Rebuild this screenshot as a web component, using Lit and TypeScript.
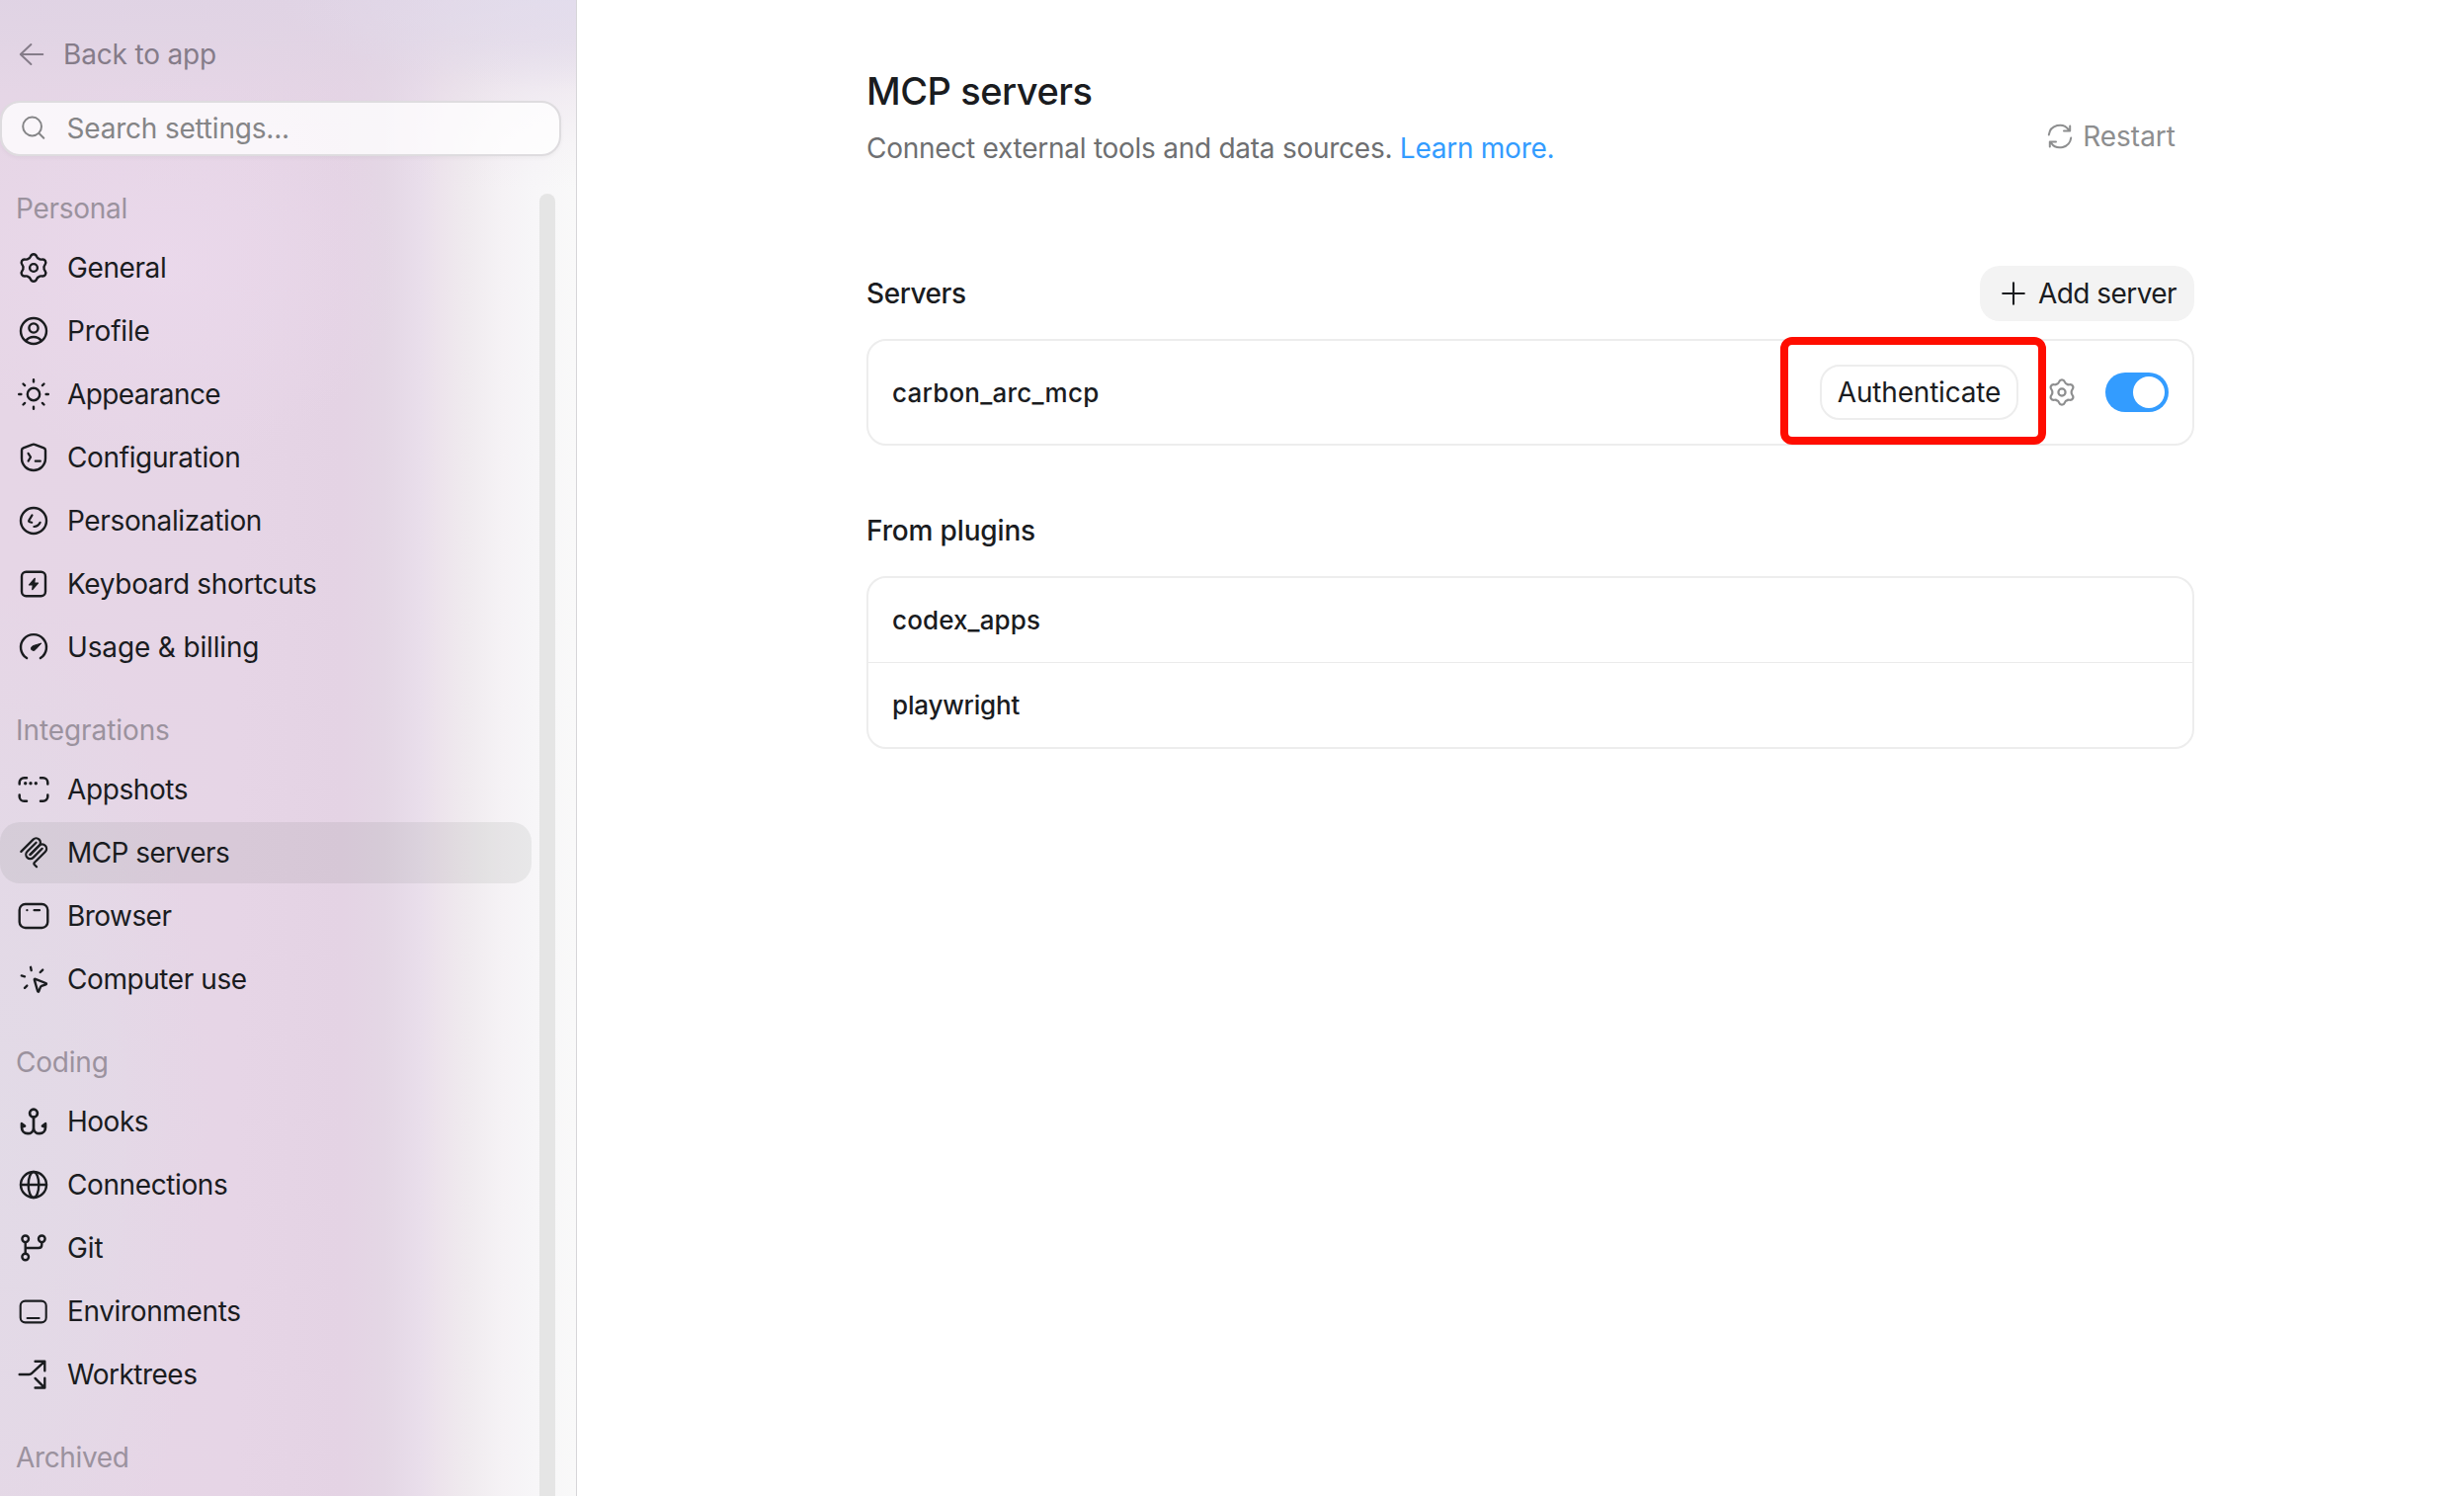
import { LitElement, html, svg, css, type SVGTemplateResult } from "lit";
import { customElement, property } from "lit/decorators.js";
import { classMap } from "lit/directives/class-map.js";
import { styleMap } from "lit/directives/style-map.js";

/** Builds a six-lobed gear outline centred on the origin. */
function gearPath(): string {
  const lobe: [number, number][] = [
    [-4, -9.4], [-3.7, -10.2], [-3.1, -11.5],
    [-2.4, -13.2], [-1.3, -13.8], [0, -13.8],
    [1.3, -13.8], [2.4, -13.2], [3.1, -11.5],
    [3.7, -10.2], [4, -9.4], [5.3, -9.2],
  ];
  const turn = ([x, y]: [number, number], a: number) => {
    const c = Math.cos(a), s = Math.sin(a);
    return `${(x * c - y * s).toFixed(2)} ${(x * s + y * c).toFixed(2)}`;
  };
  let d = `M${turn([-5.3, -9.2], 0)}`;
  for (let k = 0; k < 6; k++) {
    const p = lobe.map((pt) => turn(pt, (k * Math.PI) / 3));
    for (let i = 0; i < p.length; i += 3) d += `C${p[i]} ${p[i + 1]} ${p[i + 2]}`;
  }
  return d + "Z";
}

/* Every glyph is drawn around (0,0) in a 32-unit box. */
const ICONS: Record<string, SVGTemplateResult> = {
  back: svg`<path d="M11.3 0H-11M-.6-10-11.2 0-.6 10" stroke-width="2"/>`,
  search: svg`<circle cx="-1.4" cy="-2" r="9.4" stroke-width="2"/><path d="M5.5 5 10.3 9.8" stroke-width="2"/>`,
  gear: svg`<path d="${gearPath()}"/><circle r="3.9"/>`,
  user: svg`<circle r="13"/><circle cy="-3" r="4.6"/><path d="M-7.8 10C-6 7.3-3.2 6 0 6S6 7.3 7.8 10"/>`,
  sun: svg`<circle r="6.2"/><path d="M0-14.8V-12.6M0 12.6V14.8M-14.8 0H-12.6M12.6 0H14.8M-10.5-10.5-8.9-8.9M8.9 8.9 10.5 10.5M-10.5 10.5-8.9 8.9M8.9-8.9 10.5-10.5"/>`,
  shield: svg`<path d="M-1.1-13.1Q0-13.6 1.1-13.1L10.4-9.6Q12-9 12-7.2V.8C12 8 6.4 13 0 13S-12 8-12 .8V-7.2Q-12-9-10.4-9.6Z"/><path d="M-5.4-4.2-3-.3-5.4 3.6M1.8 3.7H6.8" stroke-width="2.2"/>`,
  face: svg`<circle r="13"/><path d="M-1.5-5.6-4.7-.4Q-5.3.9-4 1.2L-1.8 1.7M.4 6Q4.8 5.8 6.6 1.8" stroke-width="2.2"/>`,
  bolt: svg`<rect x="-12" y="-12.2" width="24" height="24.4" rx="4.4"/><path d="M1.2-5.6-4.4.9H-.6L-1.2 5.6 4.4-.9H.6Z" fill="currentColor" stroke-width="1.4"/>`,
  gauge: svg`<path d="M-6.9 11.1A13 13 0 1 1 6.9 11.1"/><path d="M7.6-3.7 1.8 2.6C.6 3.9-1.5 3.7-2.3 2.3S-2-.9-.5-1.4Z" fill="currentColor" stroke-width="1"/>`,
  shots: svg`<path d="M-14.3-5.6V-7.2A4.6 4.6 0 0 1-9.7-11.8H-7M7-11.8H9.7A4.6 4.6 0 0 1 14.3-7.2V-5.6M14.3 5.6V7.2A4.6 4.6 0 0 1 9.7 11.8H7M-7 11.8H-9.7A4.6 4.6 0 0 1-14.3 7.2V5.6" stroke-width="2.5"/><g fill="currentColor" stroke="none"><circle cx="-8.3" cy="-6.3" r="1.7"/><circle cx="-3" cy="-6.3" r="1.7"/><circle cx="2.3" cy="-6.3" r="1.7"/></g>`,
  mcp: svg`<g transform="translate(.2 -.2) scale(.18) translate(-89.5 -90)" stroke-width="12.5"><path d="M18 84.85 85.88 16.97C95.25 7.6 110.45 7.6 119.82 16.97S129.2 41.54 119.82 50.91L68.56 102.18"/><path d="M69.27 101.47 119.82 50.91C129.2 41.54 144.39 41.54 153.77 50.91L154.12 51.27C163.49 60.64 163.49 75.83 154.12 85.21L92.72 146.6C89.6 149.72 89.6 154.79 92.72 157.91L105.33 170.52"/><path d="M102.85 33.94 52.65 84.15C43.28 93.52 43.28 108.71 52.65 118.09S77.22 127.46 86.59 118.09L136.79 67.88"/></g>`,
  browser: svg`<rect x="-14.3" y="-12" width="28.6" height="24" rx="6"/><path d="M.6-5.8H6M-6.6-5.8h.01" stroke-width="2.3"/>`,
  pointer: svg`<path d="M.9.9Q.4-.6 1.9-.1L12.4 4Q13.6 4.7 12.3 5.3L8 6.9Q7.3 7.2 7 7.9L5.3 12.1Q4.7 13.3 4.1 12Z"/><path d="M-3-12.2-2.3-9M9.2-9.4 6.7-7M-12.2-3.6-9-2.7M-9 8.8-6.7 6.6"/>`,
  hook: svg`<circle cy="-8.4" r="3.9" stroke-width="2.7"/><path d="M0-4.4V7M0 6.4C0 10-2.8 12.2-5.9 12.2-9.6 12.2-12 9.4-12 6V2.2L-9 4.6-11.6 5.6M0 6.4C0 10 2.8 12.2 5.9 12.2 9.6 12.2 12 9.4 12 6V2.2L9 4.6 11.6 5.6" stroke-width="2.7"/>`,
  globe: svg`<circle r="13"/><ellipse rx="5.3" ry="13"/><path d="M-13 0H13"/>`,
  branch: svg`<circle cx="-8.3" cy="-9.2" r="3.3"/><circle cx="8.3" cy="-9.2" r="3.3"/><circle cx="-8.3" cy="9" r="3.3"/><path d="M-8.3-5.8V5.6M-8.3 0H5Q8.3 0 8.3-3.3V-5.8"/>`,
  screen: svg`<rect x="-13.3" y="-10.4" width="26" height="21.8" rx="4.8" stroke-width="2.1"/><path d="M-6.4 7H5.6" stroke-width="2.1"/>`,
  worktree: svg`<path d="M-14.3 0H-4.6Q-3 0-1.9-1.1L10.8-12.8M1.6-13.3H11.3V-3.8M1.6 3.9 10.8 13.2M1.6 13.5H11.3V3.6"/>`,
  restart: svg`<path d="M-11.2-1.6A11.2 11.2 0 0 1 9-6.6M10.2-10.6V-5.6H4M11.2 1.6A11.2 11.2 0 0 1-9 6.6M-10.2 10.6V5.6H-4" stroke-width="2"/>`,
  plus: svg`<path d="M0-10.8V10.8M-10.8 0H10.8" stroke-width="2.1"/>`,
};

@customElement("ui-icon")
class UiIcon extends LitElement {
  @property() name = "";
  static styles = css`
    :host { display: block; flex: none; width: 32px; height: 32px; }
    .glyph {
      display: block; overflow: visible; fill: none; stroke: currentColor;
      stroke-width: 2.4; stroke-linecap: round; stroke-linejoin: round;
    }
  `;
  render() {
    return html`<svg class="glyph" width="32" height="32" viewBox="-16 -16 32 32" aria-hidden="true">${ICONS[this.name]}</svg>`;
  }
}

interface NavItem { label: string; icon: string; track: number; }
interface NavGroup { title: string; track: number; items: NavItem[]; }

const item = (label: string, icon: string, track: number): NavItem => ({ label, icon, track });

const GROUPS: NavGroup[] = [
  { title: "Personal", track: -0.28, items: [
    item("General", "gear", -0.4),
    item("Profile", "user", -0.2),
    item("Appearance", "sun", -0.6),
    item("Configuration", "shield", -0.37),
    item("Personalization", "face", -0.36),
    item("Keyboard shortcuts", "bolt", -0.34),
    item("Usage & billing", "gauge", -0.15),
  ] },
  { title: "Integrations", track: -0.08, items: [
    item("Appshots", "shots", -0.4),
    item("MCP servers", "mcp", -0.57),
    item("Browser", "browser", -0.55),
    item("Computer use", "pointer", -0.42),
  ] },
  { title: "Coding", track: -0.2, items: [
    item("Hooks", "hook", -0.5),
    item("Connections", "globe", -0.4),
    item("Git", "branch", -0.09),
    item("Environments", "screen", -0.36),
    item("Worktrees", "worktree", -0.5),
  ] },
  { title: "Archived", track: -0.36, items: [] },
];

const tracking = (px: number) => styleMap({ letterSpacing: `${px}px` });

@customElement("settings-sidebar")
class SettingsSidebar extends LitElement {
  @property() current = "MCP servers";
  static styles = css`
    :host {
      box-sizing: border-box; display: flex; flex-direction: column; flex: none;
      width: 584px; height: 100%; overflow: hidden; border-right: 1px solid #d6d5d8;
      background:
        radial-gradient(ellipse 300px 90px at 100% 0, rgba(227, 222, 238, .8) 0, rgba(227, 222, 238, 0) 100%),
        linear-gradient(180deg, rgba(223, 211, 228, .85) 0, rgba(224, 212, 228, .72) 40px, rgba(228, 214, 230, .36) 95px, rgba(230, 214, 230, .12) 145px, rgba(230, 214, 230, 0) 190px),
        radial-gradient(ellipse 210px 560px at 0 76%, rgba(225, 220, 231, .75) 0, rgba(225, 220, 231, .5) 50%, rgba(225, 220, 231, 0) 100%),
        radial-gradient(ellipse 240px 200px at 170px 270px, rgba(235, 217, 236, .8) 0, rgba(235, 217, 236, 0) 100%),
        linear-gradient(90deg, #e6d6e6 0, #e6d5e6 240px, #e4d3e4 345px, #e4d7e5 390px, #e9deeb 425px, #ede4ec 446px, #f0ebef 475px, #f5f2f5 508px, #f7f6f8 540px, #f9f9f9 584px);
    }
    .back {
      display: flex; align-items: center; gap: 16px; height: 64px;
      margin-top: 23px; padding-left: 16px; color: #857c89; letter-spacing: -.17px;
    }
    .search {
      box-sizing: border-box; display: flex; align-items: center; gap: 17.5px;
      width: 568px; height: 56px; margin: 15px 0 0; padding-left: 16px;
      border: 2px solid #dedcdf; border-radius: 20px; background: rgba(255, 255, 255, .78);
      background-clip: padding-box; box-shadow: 0 2px 4px rgba(0, 0, 0, .04);
      color: #858587; letter-spacing: -.2px;
    }
    .scroller { display: flex; flex: 1; justify-content: space-between; min-height: 0; margin: 38px 21px 0 0; }
    .thumb { width: 16px; border-radius: 8px 8px 0 0; background: #e5e5e5; }
    .groups { display: flex; flex-direction: column; gap: 38px; width: 538px; }
    .title { height: 30px; margin-bottom: 14px; padding-left: 16px; line-height: 30px; color: #9b929e; }
    .items { display: flex; flex-direction: column; gap: 2px; }
    .item {
      display: flex; align-items: center; gap: 18px; height: 62px;
      padding-left: 18px; border-radius: 20px; color: #1a1c1f;
    }
    .current { background: rgba(26, 40, 31, .065); }
  `;
  render() {
    return html`
      <div class="back"><ui-icon name="back"></ui-icon><span>Back to app</span></div>
      <div class="search"><ui-icon name="search"></ui-icon><span>Search settings...</span></div>
      <div class="scroller">
        <nav class="groups">
          ${GROUPS.map((g) => html`
            <section>
              <div class="title" style=${tracking(g.track)}>${g.title}</div>
              <div class="items">
                ${g.items.map((i) => html`
                  <div class=${classMap({ item: true, current: i.label === this.current })}>
                    <ui-icon name=${i.icon}></ui-icon><span style=${tracking(i.track)}>${i.label}</span>
                  </div>`)}
              </div>
            </section>`)}
        </nav>
        <div class="thumb"></div>
      </div>`;
  }
}

@customElement("mcp-page")
class McpPage extends LitElement {
  static styles = css`
    :host { display: block; flex: 1; box-sizing: border-box; padding: 68px 273px 0 293px; background: #fff; color: #1a1c1f; }
    .head { display: flex; align-items: flex-end; justify-content: space-between; height: 102px; }
    .title { height: 48px; margin-bottom: 14px; font-size: 38px; font-weight: 500; line-height: 48px; letter-spacing: -.48px; }
    .sub { height: 40px; line-height: 40px; color: #6e6f71; letter-spacing: -.26px; }
    .link { color: #339cff; }
    .restart { display: flex; align-items: center; gap: 7px; height: 56px; margin-bottom: 4px; padding-right: 19px; color: #8d8e8f; }
    .bar { display: flex; align-items: center; justify-content: space-between; height: 56px; margin-bottom: 18px; }
    .first { margin-top: 99px; }
    .next { margin-top: 58px; }
    .name { font-weight: 500; letter-spacing: -.45px; }
    .plugins { letter-spacing: -.15px; }
    .add {
      box-sizing: border-box; display: flex; align-items: center; gap: 9px;
      width: 217px; height: 56px; padding-left: 18px; border-radius: 20px;
      background: #f3f3f3; letter-spacing: -.56px; white-space: nowrap;
    }
    .card { box-sizing: border-box; border: 2px solid #ededed; border-radius: 20px; }
    .server { display: flex; align-items: center; gap: 28px; height: 108px; padding: 0 24px; }
    .label { flex: 1; font-size: 26px; font-weight: 500; }
    .server .label { padding-top: 2px; letter-spacing: .22px; }
    .row { display: flex; align-items: center; height: 85px; padding: 0 24px; }
    .row + .row { border-top: 1px solid #ebebeb; }
    .wide { letter-spacing: .12px; }
    .tight { letter-spacing: -.19px; }
    .spot { position: relative; }
    .auth {
      box-sizing: border-box; display: flex; align-items: center; justify-content: center;
      width: 201px; height: 56px; border: 2px solid #ededed; border-radius: 20px; letter-spacing: -.18px;
    }
    .ring {
      position: absolute; box-sizing: border-box; inset: -28px -28px -25px -40px;
      border: 8px solid #ff0d00; border-radius: 12px;
    }
    .options { color: #8d8e8f; }
    .thin { transform: scale(.92); }
    .toggle {
      box-sizing: border-box; display: flex; justify-content: flex-end; width: 64px; height: 40px;
      padding: 4px; border-radius: 20px; background: #339cff;
    }
    .knob { width: 32px; height: 32px; border-radius: 50%; background: #fff; }
  `;
  render() {
    return html`
      <header class="head">
        <div>
          <div class="title">MCP servers</div>
          <div class="sub">Connect external tools and data sources. <span class="link">Learn more.</span></div>
        </div>
        <div class="restart"><ui-icon name="restart"></ui-icon><span>Restart</span></div>
      </header>
      <div class="bar first">
        <span class="name">Servers</span>
        <div class="add"><ui-icon name="plus"></ui-icon><span>Add server</span></div>
      </div>
      <div class="card server">
        <span class="label">carbon_arc_mcp</span>
        <div class="spot"><div class="auth">Authenticate</div><div class="ring"></div></div>
        <div class="options"><ui-icon class="thin" name="gear"></ui-icon></div>
        <div class="toggle"><div class="knob"></div></div>
      </div>
      <div class="bar next"><span class="name plugins">From plugins</span></div>
      <div class="card">
        <div class="row"><span class="label wide">codex_apps</span></div>
        <div class="row"><span class="label tight">playwright</span></div>
      </div>`;
  }
}

@customElement("app-root")
class AppRoot extends LitElement {
  static styles = css`
    :host {
      display: flex; height: 100vh; overflow: hidden; background: #fff;
      font-family: Inter, "Liberation Sans", sans-serif; font-size: 28px; line-height: 34px;
    }
  `;
  render() {
    return html`<settings-sidebar></settings-sidebar><mcp-page></mcp-page>`;
  }
}
